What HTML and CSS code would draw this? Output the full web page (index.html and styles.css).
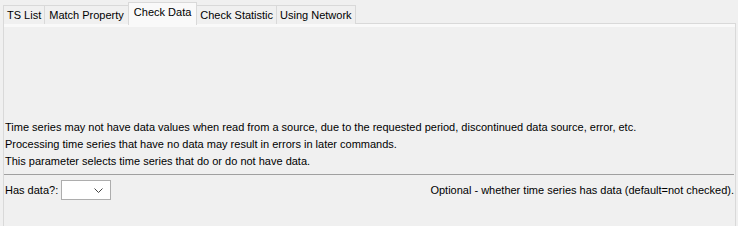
FILE: index.html
```html
<!DOCTYPE html>
<html lang="en">
  <head>
    <meta charset="UTF-8" />
    <title>Check Data</title>
    <link rel="stylesheet" href="styles.css">
  </head>
  <body>
    <div class="tabs">
      <div class="tab">TS List</div>
      <div class="tab">Match Property</div>
      <div class="tab active">Check Data</div>
      <div class="tab">Check Statistic</div>
      <div class="tab">Using Network</div>
    </div>

    <div class="panel">
      <div class="notes">
        <p>Time series may not have data values when read from a source, due to the requested period, discontinued data source, error, etc.</p>
        <p>Processing time series that have no data may result in errors in later commands.</p>
        <p>This parameter selects time series that do or do not have data.</p>
      </div>

      <div class="param-row">
        <label for="hasData">Has data?:</label>
        <div class="combo" id="hasData">
          <svg width="9" height="5" viewBox="0 0 9 5">
            <path d="M0.5 0.5 L4.5 4.5 L8.5 0.5" fill="none" stroke="#444" stroke-width="1" />
          </svg>
        </div>
        <span class="hint">Optional - whether time series has data (default=not checked).</span>
      </div>
    </div>
  </body>
</html>
```

FILE: styles.css
```css
:root {
  --bg: #f0f0f0;
  --tab-bg: #f0f0f0;
  --tab-active: #f9f9f9;
  --tab-border: #d9d9d9;
  --text: #000000;
}

* {
  margin: 0;
  padding: 0;
  box-sizing: border-box;
}

body {
  background-color: var(--bg);
  color: var(--text);
  font-family: "Liberation Sans", Arial, sans-serif;
  font-size: 11px;
  height: 226px;
  display: flex;
  flex-direction: column;
  overflow: hidden;
}

.tabs {
  display: flex;
  align-items: flex-end;
  height: 24px;
  padding-left: 3px;
  position: relative;
  z-index: 1;
}

.tab {
  height: 19px;
  line-height: 18px;
  padding: 0 3px;
  background-color: var(--tab-bg);
  border: 1px solid var(--tab-border);
  border-bottom: none;
  margin-left: -1px;
}

.tab:first-child {
  margin-left: 0;
}

.tab:nth-child(2) {
  padding: 0 4px;
}

.tab.active {
  height: 23px;
  line-height: 19px;
  padding: 0 5px;
  background-color: var(--tab-active);
  margin-bottom: -1px;
}

.panel {
  flex: 1;
  margin: -1px 2px 0 3px;
  border: 1px solid var(--tab-border);
  border-bottom: none;
  box-shadow: inset 0 3px 0 var(--tab-active);
  padding: 95px 0 0 0;
}

.notes {
  padding-left: 1px;
  line-height: 17px;
  padding-bottom: 4px;
  border-bottom: 1px solid #a0a0a0;
  margin-right: 1px;
}

.param-row {
  display: flex;
  align-items: center;
  height: 20px;
  margin-top: 5px;
  padding-left: 1px;
  padding-right: 1px;
}

.param-row label {
  margin-right: 3px;
}

.combo {
  width: 50px;
  height: 20px;
  background-color: #ffffff;
  border: 1px solid #adadad;
  display: flex;
  align-items: center;
  justify-content: flex-end;
  padding-right: 7px;
}

.hint {
  margin-left: auto;
}
```
